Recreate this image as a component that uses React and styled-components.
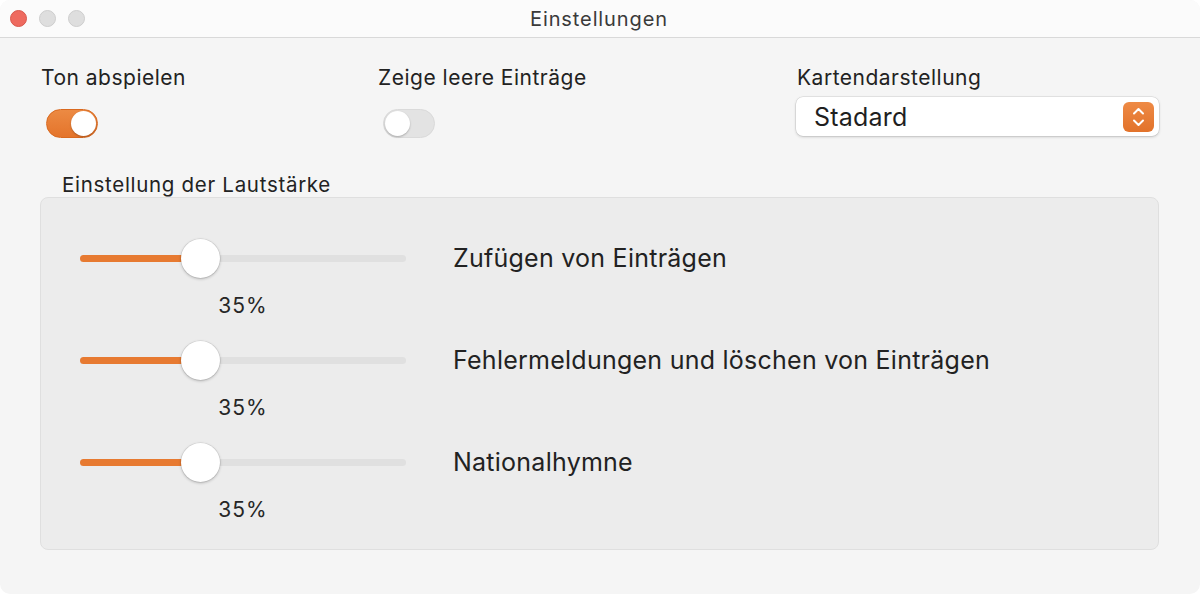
import React from 'react';
import styled, { createGlobalStyle } from 'styled-components';

const GlobalStyle = createGlobalStyle`
  html, body {
    margin: 0;
    padding: 0;
    background: #ffffff;
  }
  body {
    font-family: Inter, "Noto Sans", "Liberation Sans", sans-serif;
    color: #262626;
  }
`;

const Window = styled.div`
  width: 1200px;
  height: 594px;
  box-sizing: border-box;
  background: #f5f5f5;
  border-radius: 10px;
  overflow: hidden;
  display: flex;
  flex-direction: column;
`;

const TitleBar = styled.div`
  height: 37px;
  flex-shrink: 0;
  display: flex;
  align-items: center;
  background: #fbfbfb;
  border-bottom: 1px solid #d9d9d9;
`;

const Lights = styled.div`
  display: flex;
  gap: 12px;
  padding-left: 10px;
`;

const Light = styled.span`
  width: 17px;
  height: 17px;
  border-radius: 50%;
  box-sizing: border-box;
  background: ${p => (p.red ? '#ee6a5f' : '#dedede')};
  border: 1px solid ${p => (p.red ? '#d8574c' : '#cdcdcd')};
`;

const Title = styled.div`
  flex: 1;
  text-align: center;
  font-size: 20px;
  letter-spacing: 0.9px;
  color: #3a3a3a;
  margin-right: 87px;
`;

const Content = styled.div`
  flex: 1;
  padding: 25px 41px 0 40px;
`;

const TopRow = styled.div`
  display: grid;
  grid-template-columns: 337px 419px 1fr;
`;

const Field = styled.div`
  display: flex;
  flex-direction: column;
`;

const Label = styled.div`
  font-size: 21px;
  letter-spacing: 0.5px;
  line-height: 30px;
  padding-left: 1px;
  color: #222;
`;

const Switch = styled.div`
  width: 52px;
  height: 29px;
  margin: 16px 0 0 6px;
  border-radius: 15px;
  box-sizing: border-box;
  position: relative;
  background: ${p => (p.on ? 'linear-gradient(#ec8a43, #e4742b)' : '#e3e3e3')};
  border: 1px solid ${p => (p.on ? '#d9691f' : '#dadada')};
`;

const Knob = styled.span`
  position: absolute;
  top: 1px;
  left: ${p => (p.on ? '24px' : '1px')};
  width: 25px;
  height: 25px;
  border-radius: 50%;
  background: #fff;
  box-shadow: 0 1px 2px rgba(0, 0, 0, 0.25);
`;

const Select = styled.div`
  margin-top: 4px;
  height: 39px;
  box-sizing: border-box;
  background: #fff;
  border-radius: 7px;
  box-shadow: 0 0 0 0.5px rgba(0, 0, 0, 0.12), 0 1px 3px rgba(0, 0, 0, 0.18);
  display: flex;
  align-items: center;
  justify-content: space-between;
  padding: 0 5px 0 18px;
  font-size: 25px;
  letter-spacing: 0.2px;
  color: #1f1f1f;
`;

const Stepper = styled.span`
  width: 31px;
  height: 30px;
  border-radius: 6px;
  background: linear-gradient(#ee8a45, #e2722a);
  display: flex;
  align-items: center;
  justify-content: center;
`;

const Section = styled.div`
  margin-top: 35px;
`;

const SectionTitle = styled.div`
  font-size: 20.5px;
  letter-spacing: 0.7px;
  line-height: 24px;
  padding-left: 22px;
  color: #222;
`;

const Box = styled.div`
  background: #ececec;
  border: 1px solid #dfdfdf;
  border-radius: 8px;
  padding: 40px 40px 5px 39px;
`;

const Row = styled.div`
  height: 102px;
  display: grid;
  grid-template-columns: 326px 1fr;
  column-gap: 47px;
`;

const SliderCell = styled.div`
  display: flex;
  flex-direction: column;
  align-items: center;
`;

const Slider = styled.div`
  width: 100%;
  height: 40px;
  position: relative;
  display: flex;
  align-items: center;
`;

const Track = styled.div`
  width: 100%;
  height: 7px;
  border-radius: 4px;
  background: #e0e0e0;
  overflow: hidden;
`;

const Fill = styled.div`
  height: 100%;
  background: #e77a31;
`;

const Thumb = styled.span`
  position: absolute;
  top: 1px;
  width: 39px;
  height: 39px;
  margin-left: -19.5px;
  border-radius: 50%;
  background: #fff;
  box-shadow: 0 0 0 0.5px rgba(0, 0, 0, 0.1), 0 1px 3px rgba(0, 0, 0, 0.25);
`;

const Percent = styled.div`
  margin-top: 16px;
  font-size: 21px;
  letter-spacing: 1px;
  line-height: 24px;
  color: #262626;
`;

const RowLabel = styled.div`
  font-size: 25px;
  letter-spacing: 0.25px;
  line-height: 40px;
  color: #222;
`;

const volumes = [
  { label: 'Zufügen von Einträgen', value: 35 },
  { label: 'Fehlermeldungen und löschen von Einträgen', value: 35 },
  { label: 'Nationalhymne', value: 35 },
];

function VolumeRow({ label, value }) {
  const width = 326;
  const pos = 20 + (width - 40) * (value / 100);
  return (
    <Row>
      <SliderCell>
        <Slider>
          <Track>
            <Fill style={{ width: pos }} />
          </Track>
          <Thumb style={{ left: pos }} />
        </Slider>
        <Percent>{value}%</Percent>
      </SliderCell>
      <RowLabel>{label}</RowLabel>
    </Row>
  );
}

export default function App() {
  return (
    <>
      <GlobalStyle />
      <Window>
        <TitleBar>
          <Lights>
            <Light red />
            <Light />
            <Light />
          </Lights>
          <Title>Einstellungen</Title>
        </TitleBar>
        <Content>
          <TopRow>
            <Field>
              <Label>Ton abspielen</Label>
              <Switch on>
                <Knob on />
              </Switch>
            </Field>
            <Field>
              <Label>Zeige leere Einträge</Label>
              <Switch>
                <Knob />
              </Switch>
            </Field>
            <Field>
              <Label>Kartendarstellung</Label>
              <Select>
                Stadard
                <Stepper>
                  <svg width="13" height="22" viewBox="0 0 13 22" fill="none" stroke="#fff" strokeWidth="2" strokeLinecap="round" strokeLinejoin="round">
                    <path d="M2 7.5 L6.5 3 L11 7.5" />
                    <path d="M2 14.5 L6.5 19 L11 14.5" />
                  </svg>
                </Stepper>
              </Select>
            </Field>
          </TopRow>
          <Section>
            <SectionTitle>Einstellung der Lautstärke</SectionTitle>
            <Box>
              {volumes.map(v => (
                <VolumeRow key={v.label} label={v.label} value={v.value} />
              ))}
            </Box>
          </Section>
        </Content>
      </Window>
    </>
  );
}
